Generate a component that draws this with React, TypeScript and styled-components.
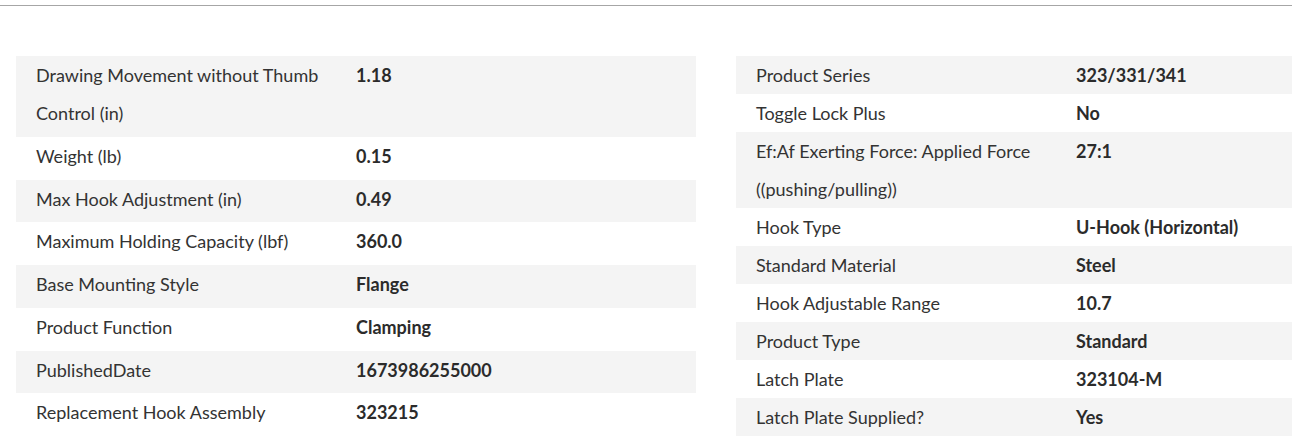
import styled, { createGlobalStyle } from "styled-components";

const GlobalStyle = createGlobalStyle`
  html, body {
    margin: 0;
    padding: 0;
    background: #fff;
    font-family: Lato, "Liberation Sans", sans-serif;
  }
`;

const Page = styled.div`
  padding-top: 5px;
`;

const Divider = styled.div`
  height: 1px;
  background-color: #a6a6a6;
`;

const Columns = styled.div`
  display: flex;
  align-items: stretch;
  gap: 40px;
  padding: 50px 0 0 16px;
`;

const SpecTable = styled.div<{ width?: number }>`
  display: flex;
  flex-direction: column;
  width: ${(props) => (props.width ? `${props.width}px` : "auto")};
  flex: ${(props) => (props.width ? "0 0 auto" : "1 1 0")};
  min-width: 0;
`;

const Row = styled.div<{ shaded: boolean }>`
  display: flex;
  align-items: flex-start;
  flex: 1 1 auto;
  background-color: ${(props) => (props.shaded ? "#f4f4f4" : "#fff")};
`;

const Label = styled.div`
  flex: 0 0 320px;
  box-sizing: border-box;
  padding: 0 16px 0 20px;
  font-size: 18px;
  line-height: 38px;
  color: #333;
`;

const Value = styled.div`
  flex: 1 1 auto;
  padding: 0 20px;
  font-size: 18px;
  line-height: 38px;
  font-weight: 700;
  color: #2b2b2b;
  white-space: nowrap;
`;

type Spec = [string, string];

const leftSpecs: Spec[] = [
  ["Drawing Movement without Thumb Control (in)", "1.18"],
  ["Weight (lb)", "0.15"],
  ["Max Hook Adjustment (in)", "0.49"],
  ["Maximum Holding Capacity (lbf)", "360.0"],
  ["Base Mounting Style", "Flange"],
  ["Product Function", "Clamping"],
  ["PublishedDate", "1673986255000"],
  ["Replacement Hook Assembly", "323215"],
];

const rightSpecs: Spec[] = [
  ["Product Series", "323/331/341"],
  ["Toggle Lock Plus", "No"],
  ["Ef:Af Exerting Force: Applied Force ((pushing/pulling))", "27:1"],
  ["Hook Type", "U-Hook (Horizontal)"],
  ["Standard Material", "Steel"],
  ["Hook Adjustable Range", "10.7"],
  ["Product Type", "Standard"],
  ["Latch Plate", "323104-M"],
  ["Latch Plate Supplied?", "Yes"],
];

const Specs = ({ rows, width }: { rows: Spec[]; width?: number }) => (
  <SpecTable width={width}>
    {rows.map(([label, value], i) => (
      <Row key={label} shaded={i % 2 === 0}>
        <Label>{label}</Label>
        <Value>{value}</Value>
      </Row>
    ))}
  </SpecTable>
);

const App = () => {
  return (
    <>
      <GlobalStyle />
      <Page>
        <Divider />
        <Columns>
          <Specs rows={leftSpecs} width={680} />
          <Specs rows={rightSpecs} />
        </Columns>
      </Page>
    </>
  );
};

export default App;
